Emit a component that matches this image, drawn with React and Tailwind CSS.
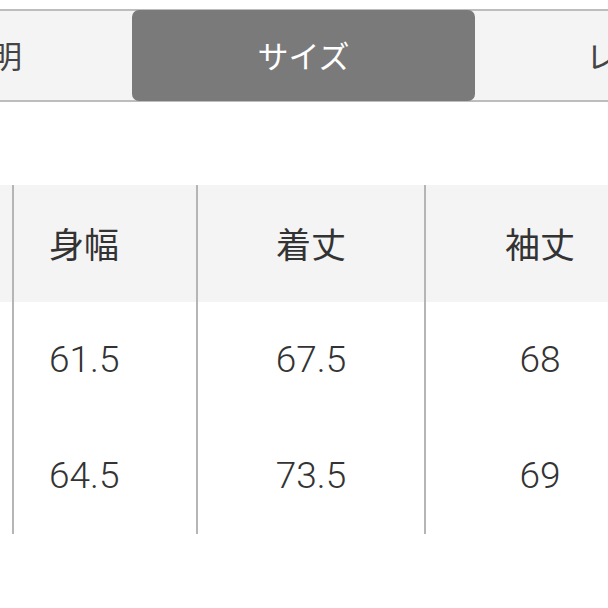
import React from 'react'

const rows = [
  ['61.5', '67.5', '68'],
  ['64.5', '73.5', '69'],
]

const jp = { fontFamily: '"Noto Sans CJK JP", "Noto Sans", sans-serif' }
const num = { fontFamily: 'Roboto, "Noto Sans CJK JP", sans-serif' }

export default function App() {
  return (
    <div className="w-[608px] h-[608px] bg-white overflow-hidden pt-[9px]" style={jp}>
      {/* tabs */}
      <div className="flex h-[93px] bg-[#f4f4f4] border-y-2 border-[#bdbdbd] text-[31px] text-[#444]">
        <div className="w-[132px] shrink-0 overflow-hidden flex items-center justify-end pr-[110px]">
          <span className="shrink-0 whitespace-nowrap">説明</span>
        </div>
        <div className="w-[343px] shrink-0 -my-[1px] bg-[#7a7a7a] rounded-[7px] flex items-center justify-center text-white">
          サイズ
        </div>
        <div className="flex-1 flex items-center pl-[111px] overflow-hidden">
          <span className="shrink-0 whitespace-nowrap">レビュー</span>
        </div>
      </div>

      {/* size table */}
      <div className="mt-[83px] overflow-hidden">
        <div className="grid grid-cols-[14px_184px_228px_228px] w-[654px] text-[#333]">
          <div className="h-[117px] bg-[#f4f4f4] border-r-2 border-[#b5b5b5]" />
          <div className="h-[117px] bg-[#f4f4f4] border-r-2 border-[#b5b5b5] flex items-center pl-[35px] text-[35px]">身幅</div>
          <div className="h-[117px] bg-[#f4f4f4] border-r-2 border-[#b5b5b5] flex items-center justify-center text-[35px]">着丈</div>
          <div className="h-[117px] bg-[#f4f4f4] flex items-center justify-center text-[35px]">袖丈</div>
          {rows.map((r, i) => (
            <React.Fragment key={i}>
              <div className="h-[116px] border-r-2 border-[#b5b5b5]" />
              <div className="h-[116px] border-r-2 border-[#b5b5b5] flex items-center pl-[35px] text-[37px] font-light" style={num}>{r[0]}</div>
              <div className="h-[116px] border-r-2 border-[#b5b5b5] flex items-center justify-center text-[37px] font-light" style={num}>{r[1]}</div>
              <div className="h-[116px] flex items-center justify-center text-[37px] font-light" style={num}>{r[2]}</div>
            </React.Fragment>
          ))}
        </div>
      </div>
    </div>
  )
}
